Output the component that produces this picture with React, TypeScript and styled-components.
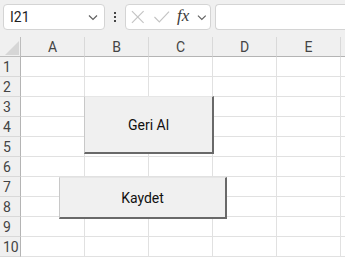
import styled, { createGlobalStyle } from 'styled-components';

const GlobalStyle = createGlobalStyle`
  html, body {
    margin: 0;
    padding: 0;
    background: #ffffff;
    font-family: Roboto, "Noto Sans", Arial, sans-serif;
    overflow: hidden;
  }
`;

const COLUMNS = ['A', 'B', 'C', 'D', 'E', ''];
const ROWS = [1, 2, 3, 4, 5, 6, 7, 8, 9, 10];

const Chevron = () => (
  <svg width="12" height="12" viewBox="0 0 12 12">
    <path d="M2 4.5 L6 8.5 L10 4.5" fill="none" stroke="#616161" strokeWidth="1.2" />
  </svg>
);

const App = () => {
  return (
    <>
      <GlobalStyle />
      <Sheet>
        <Toolbar>
          <NameBox>
            <span>I21</span>
            <Chevron />
          </NameBox>
          <Dots>
            <svg width="4" height="14" viewBox="0 0 4 14">
              <rect x="1" y="2" width="2" height="2" fill="#444" />
              <rect x="1" y="6" width="2" height="2" fill="#444" />
              <rect x="1" y="10" width="2" height="2" fill="#444" />
            </svg>
          </Dots>
          <FuncBox>
            <svg width="16" height="16" viewBox="0 0 16 16">
              <path d="M2 2 L14 14 M14 2 L2 14" stroke="#c4c4c4" strokeWidth="1.2" fill="none" />
            </svg>
            <svg width="18" height="16" viewBox="0 0 18 16">
              <path d="M1.5 8 L6.5 13 L16.5 2.5" stroke="#c4c4c4" strokeWidth="1.2" fill="none" />
            </svg>
            <Fx>fx</Fx>
            <Chevron />
          </FuncBox>
          <FormulaInput />
        </Toolbar>
        <Grid>
          <Corner>
            <svg width="14" height="14" viewBox="0 0 14 14">
              <path d="M14 0 L14 14 L0 14 Z" fill="#d6d6d6" />
            </svg>
          </Corner>
          {COLUMNS.map((c, i) => (
            <ColHeader key={'c' + i}>{c}</ColHeader>
          ))}
          {ROWS.map((r) => (
            <Row key={r} r={r} />
          ))}
          <SheetButton $top={59} $left={84} $width={130} $height={58}>
            Geri Al
          </SheetButton>
          <SheetButton $top={140} $left={59} $width={168} $height={42}>
            Kaydet
          </SheetButton>
        </Grid>
      </Sheet>
    </>
  );
};

const Row = ({ r }: { r: number }) => (
  <>
    <RowHeader>{r}</RowHeader>
    {COLUMNS.map((_, i) => (
      <Cell key={i} />
    ))}
  </>
);

export default App;

const Sheet = styled.div`
  width: 345px;
  height: 258px;
  overflow: hidden;
  background: #ffffff;
`;

const Toolbar = styled.div`
  height: 37px;
  display: flex;
  align-items: flex-start;
  padding: 4px 0 0 3px;
  box-sizing: border-box;
  background: #f0f0f0;
`;

const Box = styled.div`
  height: 26px;
  box-sizing: border-box;
  background: #ffffff;
  border: 1px solid #d4d4d4;
  border-radius: 4px;
  display: flex;
  align-items: center;
`;

const NameBox = styled(Box)`
  width: 102px;
  padding: 0 5px 0 6px;
  justify-content: space-between;
  font-size: 14px;
  color: #1f1f1f;
`;

const Dots = styled.div`
  width: 20px;
  height: 26px;
  display: flex;
  align-items: center;
  justify-content: center;
`;

const FuncBox = styled(Box)`
  width: 86px;
  padding: 0 2px 0 4px;
  gap: 7px;
`;

const Fx = styled.span`
  font-family: "Liberation Serif", "DejaVu Serif", serif;
  font-style: italic;
  font-size: 17px;
  color: #3a3a3a;
  margin-top: -2px;
`;

const FormulaInput = styled(Box)`
  flex: 1;
  margin-left: 4px;
  border-right: none;
  border-radius: 4px 0 0 4px;
`;

const Grid = styled.div`
  position: relative;
  display: grid;
  grid-template-columns: 21px repeat(6, 64px);
  grid-auto-rows: 20px;
  background: #ffffff;
`;

const HeaderCell = styled.div`
  box-sizing: border-box;
  background: #f0f0f0;
  color: #444444;
  font-size: 14px;
  display: flex;
  align-items: center;
`;

const Corner = styled(HeaderCell)`
  border-right: 1px solid #bdbdbd;
  border-bottom: 1px solid #bdbdbd;
  align-items: flex-end;
  justify-content: flex-end;
  padding: 0 1px 1px 0;
`;

const ColHeader = styled(HeaderCell)`
  justify-content: center;
  border-right: 1px solid #d9d9d9;
  border-bottom: 1px solid #b4b4b4;
`;

const RowHeader = styled(HeaderCell)`
  padding-left: 3px;
  border-right: 1px solid #b4b4b4;
  border-bottom: 1px solid #d9d9d9;
`;

const Cell = styled.div`
  box-sizing: border-box;
  border-right: 1px solid #e1e1e1;
  border-bottom: 1px solid #e1e1e1;
`;

const SheetButton = styled.div<{ $top: number; $left: number; $width: number; $height: number }>`
  position: absolute;
  top: ${(p) => p.$top}px;
  left: ${(p) => p.$left}px;
  width: ${(p) => p.$width}px;
  height: ${(p) => p.$height}px;
  box-sizing: border-box;
  background: #f0f0f0;
  border-top: 1px solid #e6e6e6;
  border-left: 1px solid #c8c8c8;
  border-right: 2px solid #696969;
  border-bottom: 2px solid #696969;
  display: flex;
  align-items: center;
  justify-content: center;
  font-size: 14px;
  color: #111111;
`;
